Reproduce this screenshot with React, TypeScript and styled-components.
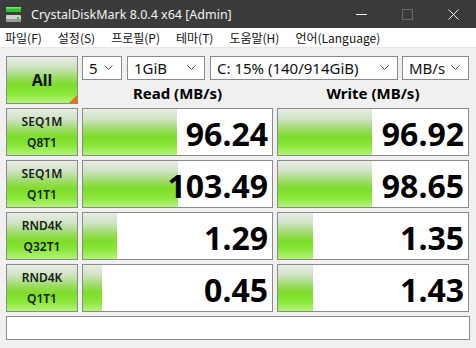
import { Fragment } from "react";
import styled, { createGlobalStyle } from "styled-components";

interface IResult {
  line1: string;
  line2: string;
  read: string;
  readBar: number;
  write: string;
  writeBar: number;
}

const results: IResult[] = [
  { line1: "SEQ1M", line2: "Q8T1", read: "96.24", readBar: 94, write: "96.92", writeBar: 94 },
  { line1: "SEQ1M", line2: "Q1T1", read: "103.49", readBar: 95, write: "98.65", writeBar: 94 },
  { line1: "RND4K", line2: "Q32T1", read: "1.29", readBar: 34, write: "1.35", writeBar: 35 },
  { line1: "RND4K", line2: "Q1T1", read: "0.45", readBar: 19, write: "1.43", writeBar: 35 },
];

const menus = ["파일(F)", "설정(S)", "프로필(P)", "테마(T)", "도움말(H)", "언어(Language)"];

const GlobalStyle = createGlobalStyle`
  html, body {
    margin: 0;
    padding: 0;
    background: #f0f0f0;
  }
  body {
    font-family: "Noto Sans", "Noto Sans CJK KR", sans-serif;
    color: #000;
  }
`;

const Window = styled.div`
  width: 476px;
  height: 348px;
  background: #f0f0f0;
  overflow: hidden;
`;

const TitleBar = styled.div`
  height: 28px;
  background: #3b3b3b;
  display: flex;
  align-items: center;
  color: #f2f2f2;
  font-size: 12.5px;
`;

const TitleIcon = styled.svg`
  margin: 0 8px 0 5px;
  flex: none;
`;

const TitleText = styled.div`
  flex: 1;
  white-space: nowrap;
`;

const WinButton = styled.div`
  width: 46px;
  height: 28px;
  display: flex;
  align-items: center;
  justify-content: center;
`;

const MenuBar = styled.div`
  height: 19px;
  background: #fff;
  border-bottom: 1px solid #e6e6e6;
  display: flex;
  align-items: center;
  padding-left: 5px;
  font-family: "Noto Sans CJK KR", "Noto Sans", sans-serif;
  font-size: 12px;
  color: #111;
`;

const MenuItem = styled.span`
  margin-right: 16px;
  white-space: nowrap;
`;

const Main = styled.div`
  display: grid;
  grid-template-columns: 72px 191px 192px;
  column-gap: 4px;
  row-gap: 4px;
  padding: 8px 0 0 6px;
`;

const greenFill = `
  linear-gradient(
    to bottom,
    #e7ece5 0%,
    #cfe3c4 22%,
    #9bdc62 45%,
    #7edd2c 60%,
    #88e636 78%,
    #b4f27c 100%
  )
`;

const AllButton = styled.div`
  position: relative;
  height: 48px;
  box-sizing: border-box;
  border: 1px solid #8a8a8a;
  background: ${greenFill};
  display: flex;
  align-items: center;
  justify-content: center;
  font-weight: 700;
  font-size: 16px;
  color: #111;

  &::after {
    content: "";
    position: absolute;
    right: 0;
    bottom: 0;
    width: 0;
    height: 0;
    border-style: solid;
    border-width: 0 0 8px 8px;
    border-color: transparent transparent #f0720f transparent;
  }
`;

const TopRight = styled.div`
  grid-column: 2 / span 2;
  display: flex;
  flex-direction: column;
`;

const ComboRow = styled.div`
  display: flex;
  gap: 5px;
  height: 24px;
`;

const Combo = styled.div<{ $w: number }>`
  width: ${(p) => p.$w}px;
  flex: none;
  box-sizing: border-box;
  background: #fff;
  border: 1px solid #8a8a8a;
  display: flex;
  align-items: center;
  justify-content: space-between;
  padding: 0 8px 0 6px;
  font-size: 15px;
  color: #111;
  white-space: nowrap;
`;

const Headers = styled.div`
  display: grid;
  grid-template-columns: 191px 192px;
  column-gap: 4px;
  height: 24px;
  align-items: center;
`;

const HeaderLabel = styled.div`
  text-align: center;
  font-weight: 700;
  font-size: 15px;
  padding-top: 2px;
`;

const TestLabel = styled.div`
  height: 48px;
  box-sizing: border-box;
  border: 1px solid #8a8a8a;
  background: ${greenFill};
  display: flex;
  flex-direction: column;
  align-items: center;
  justify-content: center;
  font-size: 12px;
  font-weight: 600;
  line-height: 21px;
  color: #1a1a1a;
`;

const Cell = styled.div`
  position: relative;
  height: 48px;
  box-sizing: border-box;
  border: 1px solid #8a8a8a;
  background: #fff;
  display: flex;
  align-items: center;
  justify-content: flex-end;
  overflow: hidden;
`;

const Bar = styled.div`
  position: absolute;
  left: 0;
  top: 0;
  bottom: 0;
  background: ${greenFill};
`;

const Value = styled.div`
  position: relative;
  font-size: 32px;
  font-weight: 700;
  padding: 3px 4px 0 0;
  color: #000;
`;

const Status = styled.div`
  grid-column: 1 / span 3;
  width: 464px;
  height: 24px;
  box-sizing: border-box;
  border: 1px solid #8a8a8a;
  background: #fff;
`;

function Chevron() {
  return (
    <svg width="9" height="6" viewBox="0 0 9 6">
      <polyline points="0.5,0.5 4.5,4.5 8.5,0.5" fill="none" stroke="#555" strokeWidth="1" />
    </svg>
  );
}

function App() {
  return (
    <Window>
      <GlobalStyle />
      <TitleBar>
        <TitleIcon width="18" height="18" viewBox="0 0 18 18">
          <rect x="1" y="2" width="15" height="5" fill="#2ec62e" />
          <rect x="1" y="2" width="15" height="1.5" fill="#6fe86f" />
          <rect x="1" y="10" width="15" height="7" rx="1" fill="#cfcfcf" />
          <rect x="1" y="14" width="15" height="3" fill="#9a9a9a" />
          <rect x="12" y="12" width="2" height="2" fill="#2ec62e" />
        </TitleIcon>
        <TitleText>CrystalDiskMark 8.0.4 x64 [Admin]</TitleText>
        <WinButton>
          <svg width="11" height="11" viewBox="0 0 11 11">
            <line x1="0" y1="5.5" x2="11" y2="5.5" stroke="#f2f2f2" strokeWidth="1" />
          </svg>
        </WinButton>
        <WinButton>
          <svg width="11" height="11" viewBox="0 0 11 11">
            <rect x="0.5" y="0.5" width="10" height="10" fill="none" stroke="#6a6a6a" strokeWidth="1" />
          </svg>
        </WinButton>
        <WinButton>
          <svg width="11" height="11" viewBox="0 0 11 11">
            <path d="M0.5 0.5 L10.5 10.5 M10.5 0.5 L0.5 10.5" stroke="#f2f2f2" strokeWidth="1" />
          </svg>
        </WinButton>
      </TitleBar>
      <MenuBar>
        {menus.map((m) => (
          <MenuItem key={m}>{m}</MenuItem>
        ))}
      </MenuBar>
      <Main>
        <AllButton>All</AllButton>
        <TopRight>
          <ComboRow>
            <Combo $w={40}>
              5<Chevron />
            </Combo>
            <Combo $w={78}>
              1GiB<Chevron />
            </Combo>
            <Combo $w={188}>
              C: 15% (140/914GiB)<Chevron />
            </Combo>
            <Combo $w={67} style={{ marginLeft: -1 }}>
              MB/s<Chevron />
            </Combo>
          </ComboRow>
          <Headers>
            <HeaderLabel>Read (MB/s)</HeaderLabel>
            <HeaderLabel>Write (MB/s)</HeaderLabel>
          </Headers>
        </TopRight>
        {results.map((r, i) => (
          <Fragment key={i}>
            <TestLabel>
              <span>{r.line1}</span>
              <span>{r.line2}</span>
            </TestLabel>
            <Cell>
              <Bar style={{ width: r.readBar }} />
              <Value>{r.read}</Value>
            </Cell>
            <Cell>
              <Bar style={{ width: r.writeBar }} />
              <Value>{r.write}</Value>
            </Cell>
          </Fragment>
        ))}
        <Status />
      </Main>
    </Window>
  );
}

export default App;
